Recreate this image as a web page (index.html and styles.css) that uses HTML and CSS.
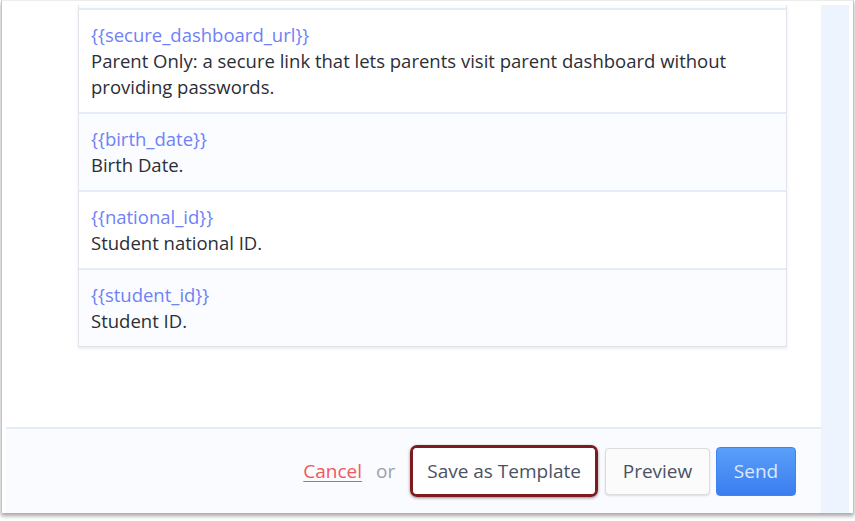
FILE: index.html
```html
<!DOCTYPE html>
<html>
<head>
<meta charset="utf-8">
<link rel="stylesheet" href="styles.css">
</head>
<body>
<div class="frame">
  <div class="main">
    <div class="viewport">
      <div class="card">
        <div class="row row-prev"></div>
        <div class="row">
          <div class="token">{{secure_dashboard_url}}</div>
          <div class="desc">Parent Only: a secure link that lets parents visit parent dashboard without providing passwords.</div>
        </div>
        <div class="row alt">
          <div class="token">{{birth_date}}</div>
          <div class="desc">Birth Date.</div>
        </div>
        <div class="row">
          <div class="token">{{national_id}}</div>
          <div class="desc">Student national ID.</div>
        </div>
        <div class="row alt">
          <div class="token">{{student_id}}</div>
          <div class="desc">Student ID.</div>
        </div>
      </div>
    </div>
    <div class="footer">
      <a class="cancel" href="#">Cancel</a>
      <span class="or">or</span>
      <div class="highlight"><button class="btn">Save as Template</button></div>
      <button class="btn preview">Preview</button>
      <button class="btn send">Send</button>
    </div>
  </div>
  <div class="side"></div>
</div>
</body>
</html>
```

FILE: styles.css
```css
html, body {
  margin: 0;
  padding: 0;
  background: #ffffff;
  width: 855px;
  height: 521px;
  overflow: hidden;
  font-family: "Open Sans", "Noto Sans", sans-serif;
}

.frame {
  box-sizing: border-box;
  margin-left: 1px;
  width: 853px;
  height: 513px;
  border-left: 1px solid #c4c4c4;
  border-right: 1px solid #c4c4c4;
  border-top: 1px solid #ececec;
  padding: 4px 2px 0 4px;
  display: flex;
  background: #ffffff;
  box-shadow: 0 3px 4px rgba(0, 0, 0, 0.35);
}

.main {
  width: 815px;
  display: flex;
  flex-direction: column;
}

.viewport {
  flex: 1;
  overflow: hidden;
  padding: 0 34px 0 72px;
}

.card {
  border-left: 1px solid #e2e6ec;
  border-right: 1px solid #e2e6ec;
  border-bottom: 1px solid #dfe3e8;
  box-shadow: 0 2px 3px rgba(0, 0, 0, 0.08);
}

.row {
  border-top: 2px solid #e3ecf7;
  padding: 12px 13px 12px 12px;
  line-height: 26px;
  font-size: 18.5px;
  background: #ffffff;
}

.row.alt {
  background: #fafcff;
}

.row-prev {
  border-top: none;
  padding: 0;
  height: 3px;
  background: #fafcff;
}

.token {
  color: #6f81f6;
}

.desc {
  color: #2c2e36;
}

.footer {
  height: 84px;
  border-top: 2px solid #e4ecf6;
  background: #f9fbfe;
  display: flex;
  align-items: center;
  justify-content: flex-end;
  padding-right: 25px;
}

.cancel {
  color: #f2575c;
  font-size: 19px;
  text-decoration: underline;
  text-underline-offset: 3px;
  margin-right: 14px;
}

.or {
  color: #9aa1ad;
  font-size: 19px;
  margin-right: 15px;
}

.highlight {
  border: 3px solid #7d1b1f;
  border-radius: 7px;
  box-shadow: 0 1px 3px rgba(0, 0, 0, 0.45);
  margin-right: 7px;
  display: flex;
}

.btn {
  font-family: "Open Sans", "Noto Sans", sans-serif;
  font-size: 19px;
  color: #4b5263;
  background: #ffffff;
  border: none;
  height: 46px;
  padding: 0 14px;
  border-radius: 4px;
  cursor: pointer;
}

.preview {
  background: #fbfbfb;
  border: 1px solid #dcdcdc;
  height: 47px;
  width: 105px;
  box-shadow: 0 1px 2px rgba(0, 0, 0, 0.12);
  margin-right: 6px;
}

.send {
  background: linear-gradient(#5a9ff9, #3a7def);
  color: #dde9ff;
  height: 49px;
  width: 80px;
  border: 1px solid #3f82f0;
}

.side {
  width: 28px;
  background: #eef4fd;
  height: 508px;
}
```
